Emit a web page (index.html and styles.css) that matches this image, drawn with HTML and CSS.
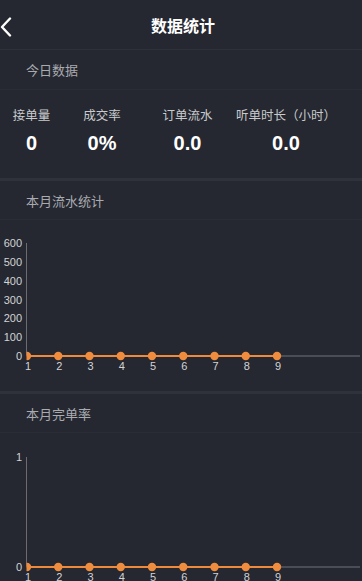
FILE: index.html
```html
<!DOCTYPE html>
<html lang="zh">
<head>
  <meta charset="UTF-8" />
  <title>数据统计</title>
  <meta name="viewport" content="width=device-width, initial-scale=1.0" />
  <link rel="stylesheet" href="styles.css">
</head>
<body>

  <header>
    <a href="#" class="back-btn">
      <svg width="12" height="20" viewBox="0 0 12 20"><path d="M10 1.5 L2 10 L10 18.5" fill="none" stroke="#fff" stroke-width="2.4" stroke-linecap="round" stroke-linejoin="round"/></svg>
    </a>
    <h2>数据统计</h2>
  </header>

  <section class="card">
    <div class="card-title">今日数据</div>
    <div class="stats">
      <div class="stat"><p>接单量</p><b>0</b></div>
      <div class="stat"><p>成交率</p><b>0%</b></div>
      <div class="stat"><p>订单流水</p><b>0.0</b></div>
      <div class="stat"><p>听单时长（小时）</p><b>0.0</b></div>
    </div>
  </section>

  <section class="card">
    <div class="card-title">本月流水统计</div>
    <svg class="chart" id="incomeChart" width="362" height="171"></svg>
  </section>

  <section class="card">
    <div class="card-title">本月完单率</div>
    <svg class="chart" id="rateChart" width="362" height="171"></svg>
  </section>

  <script>
    const days = [1, 2, 3, 4, 5, 6, 7, 8, 9];

    // draws y labels, axes and the flat orange series
    function drawChart(el, labels, top, bottom) {
      const step = (bottom - top) / (labels.length - 1);
      const xAt = d => 27 + (d - 1) * 31.25;
      let html = `<defs><clipPath id="${el.id}-clip"><rect x="26.5" y="0" width="340" height="200"/></clipPath></defs>`;

      labels.forEach((l, i) => {
        html += `<text class="ylabel" x="22" y="${bottom - i * step + 4}">${l}</text>`;
      });
      html += `<line x1="26.5" y1="${top}" x2="26.5" y2="${bottom}" class="axis"/>`;
      html += `<line x1="26.5" y1="${bottom}" x2="360" y2="${bottom}" class="base"/>`;

      let dots = '';
      days.forEach(d => {
        dots += `<circle cx="${xAt(d)}" cy="${bottom}" r="4.2" class="dot"/>`;
        html += `<text class="xlabel" x="${xAt(d) + 1}" y="${bottom + 14}">${d}</text>`;
      });
      html += `<g clip-path="url(#${el.id}-clip)">
        <line x1="${xAt(1)}" y1="${bottom}" x2="${xAt(9)}" y2="${bottom}" class="series"/>
        ${dots}
      </g>`;
      el.innerHTML = html;
    }

    drawChart(document.getElementById('incomeChart'), [0, 100, 200, 300, 400, 500, 600], 23, 136);
    drawChart(document.getElementById('rateChart'), [0, 1], 24, 134);
  </script>
</body>
</html>
```

FILE: styles.css
```css
body {
  font-family: "Liberation Sans", "Noto Sans CJK SC", sans-serif;
  margin: 0;
  padding: 0;
  background: #252830;
  color: #fff;
  overflow: hidden;
}

header {
  height: 49px;
  border-bottom: 1px solid #2e313a;
  display: flex;
  align-items: center;
  justify-content: center;
  position: relative;
}

header h2 {
  margin: 0 0 0 4px;
  font-size: 16px;
  font-weight: bold;
  color: #fff;
}

.back-btn {
  position: absolute;
  left: 0;
  top: 17px;
  display: flex;
}

.card {
  border-bottom: 3px solid #2f323a;
}

.card-title {
  height: 38px;
  line-height: 41px;
  padding-left: 26px;
  font-size: 13px;
  color: #a9abb0;
  border-bottom: 1px solid #2a2d35;
}

.card:first-of-type .card-title {
  height: 39px;
}

.stats {
  height: 88px;
  display: grid;
  grid-template-columns: 63px 78px 93px 104px;
}

.stat {
  text-align: center;
}

.stat p {
  margin: 18px 0 0;
  font-size: 12.5px;
  line-height: 17px;
  color: #c9cacd;
  white-space: nowrap;
}

.stat b {
  display: block;
  margin-top: 6px;
  font-size: 20px;
  line-height: 24px;
  font-weight: bold;
  color: #fff;
}

.chart {
  display: block;
}

.ylabel {
  font-size: 11px;
  fill: #d2d3d6;
  text-anchor: end;
}

.xlabel {
  font-size: 11px;
  fill: #d2d3d6;
  text-anchor: middle;
}

.axis {
  stroke: #6a6c72;
  stroke-width: 1;
}

.base {
  stroke: #4a4d55;
  stroke-width: 2;
}

.series {
  stroke: #ef8a3c;
  stroke-width: 2;
}

.dot {
  fill: #f08c3d;
}
```
